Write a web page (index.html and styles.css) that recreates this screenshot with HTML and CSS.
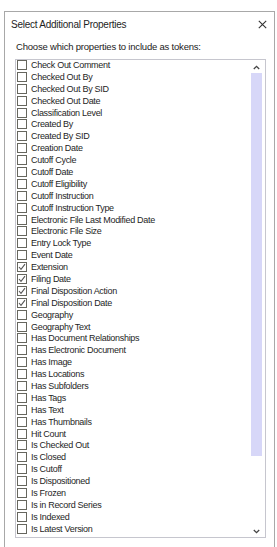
FILE: index.html
```html
<!DOCTYPE html>
<html>
<head>
<meta charset="utf-8">
<link rel="stylesheet" href="styles.css">
</head>
<body>
<div class="dialog">
  <div class="titlebar">
    <span class="title">Select Additional Properties</span>
    <svg class="close" width="9" height="9" viewBox="0 0 9 9"><path d="M0.8 0.8 L8.2 8.2 M8.2 0.8 L0.8 8.2" stroke="#333" stroke-width="1.1" fill="none"/></svg>
  </div>
  <div class="prompt">Choose which properties to include as tokens:</div>
  <div class="listbox">
    <ul class="items">
      <li><span class="cb"></span>Check Out Comment</li>
      <li><span class="cb"></span>Checked Out By</li>
      <li><span class="cb"></span>Checked Out By SID</li>
      <li><span class="cb"></span>Checked Out Date</li>
      <li><span class="cb"></span>Classification Level</li>
      <li><span class="cb"></span>Created By</li>
      <li><span class="cb"></span>Created By SID</li>
      <li><span class="cb"></span>Creation Date</li>
      <li><span class="cb"></span>Cutoff Cycle</li>
      <li><span class="cb"></span>Cutoff Date</li>
      <li><span class="cb"></span>Cutoff Eligibility</li>
      <li><span class="cb"></span>Cutoff Instruction</li>
      <li><span class="cb"></span>Cutoff Instruction Type</li>
      <li><span class="cb"></span>Electronic File Last Modified Date</li>
      <li><span class="cb"></span>Electronic File Size</li>
      <li><span class="cb"></span>Entry Lock Type</li>
      <li><span class="cb"></span>Event Date</li>
      <li><span class="cb checked"><svg width="8" height="8" viewBox="0 0 8 8"><path d="M1 4 L3 6.3 L7 1.2" stroke="#555" stroke-width="1.1" fill="none"/></svg></span>Extension</li>
      <li><span class="cb checked"><svg width="8" height="8" viewBox="0 0 8 8"><path d="M1 4 L3 6.3 L7 1.2" stroke="#555" stroke-width="1.1" fill="none"/></svg></span>Filing Date</li>
      <li><span class="cb checked"><svg width="8" height="8" viewBox="0 0 8 8"><path d="M1 4 L3 6.3 L7 1.2" stroke="#555" stroke-width="1.1" fill="none"/></svg></span>Final Disposition Action</li>
      <li><span class="cb checked"><svg width="8" height="8" viewBox="0 0 8 8"><path d="M1 4 L3 6.3 L7 1.2" stroke="#555" stroke-width="1.1" fill="none"/></svg></span>Final Disposition Date</li>
      <li><span class="cb"></span>Geography</li>
      <li><span class="cb"></span>Geography Text</li>
      <li><span class="cb"></span>Has Document Relationships</li>
      <li><span class="cb"></span>Has Electronic Document</li>
      <li><span class="cb"></span>Has Image</li>
      <li><span class="cb"></span>Has Locations</li>
      <li><span class="cb"></span>Has Subfolders</li>
      <li><span class="cb"></span>Has Tags</li>
      <li><span class="cb"></span>Has Text</li>
      <li><span class="cb"></span>Has Thumbnails</li>
      <li><span class="cb"></span>Hit Count</li>
      <li><span class="cb"></span>Is Checked Out</li>
      <li><span class="cb"></span>Is Closed</li>
      <li><span class="cb"></span>Is Cutoff</li>
      <li><span class="cb"></span>Is Dispositioned</li>
      <li><span class="cb"></span>Is Frozen</li>
      <li><span class="cb"></span>Is in Record Series</li>
      <li><span class="cb"></span>Is Indexed</li>
      <li><span class="cb"></span>Is Latest Version</li>
    </ul>
    <div class="scrollbar">
      <svg class="arrow" width="7" height="5" viewBox="0 0 7 5"><path d="M0.8 4 L3.5 1.3 L6.2 4" stroke="#444" stroke-width="1.3" fill="none"/></svg>
      <div class="track"><div class="thumb"></div></div>
      <svg class="arrow" width="7" height="5" viewBox="0 0 7 5"><path d="M0.8 1 L3.5 3.7 L6.2 1" stroke="#444" stroke-width="1.3" fill="none"/></svg>
    </div>
  </div>
</div>
</body>
</html>
```
FILE: styles.css
```css
html, body {
  margin: 0;
  padding: 0;
  background: #ffffff;
}
body {
  font-family: "Liberation Sans", Arial, sans-serif;
  color: #1e1e1e;
  overflow: hidden;
  height: 547px;
}
.dialog {
  margin: 11px 0 0 4px;
  width: 269px;
  height: 536px;
  border: 1px solid #a8a8a8;
  border-bottom: none;
  display: flex;
  flex-direction: column;
}
.titlebar {
  height: 23px;
  display: flex;
  align-items: center;
  justify-content: space-between;
  padding: 0 7px 0 6px;
}
.title {
  font-size: 10px;
  letter-spacing: -0.25px;
  margin-top: 2px;
}
.close {
  margin-top: 2px;
}
.prompt {
  font-size: 9.5px;
  letter-spacing: -0.2px;
  padding-left: 11px;
  margin-top: 6px;
  height: 18px;
  color: #222;
}
.listbox {
  margin-left: 10px;
  width: 249px;
  flex: 1;
  border: 1px solid #c6c6ce;
  margin-bottom: 10px;
  display: flex;
}
.items {
  list-style: none;
  margin: -1px 0 0 0;
  padding: 0 0 0 1px;
  flex: 1;
}
.items li {
  height: 11.9px;
  display: flex;
  align-items: center;
  font-size: 9px;
  letter-spacing: -0.3px;
  color: #1e1e1e;
  white-space: nowrap;
}
.cb {
  box-sizing: border-box;
  width: 10px;
  height: 10px;
  border: 1px solid #66665e;
  background: #fff;
  margin-right: 4px;
  display: flex;
  align-items: center;
  justify-content: center;
}
.scrollbar {
  width: 11px;
  margin-right: 3px;
  display: flex;
  flex-direction: column;
  align-items: center;
  padding-top: 5px;
  padding-bottom: 3px;
}
.arrow {
  display: block;
}
.track {
  flex: 1;
  width: 11px;
  margin: 3px 0 3px;
}
.thumb {
  height: 383px;
  background: #d7d7f8;
}
```
